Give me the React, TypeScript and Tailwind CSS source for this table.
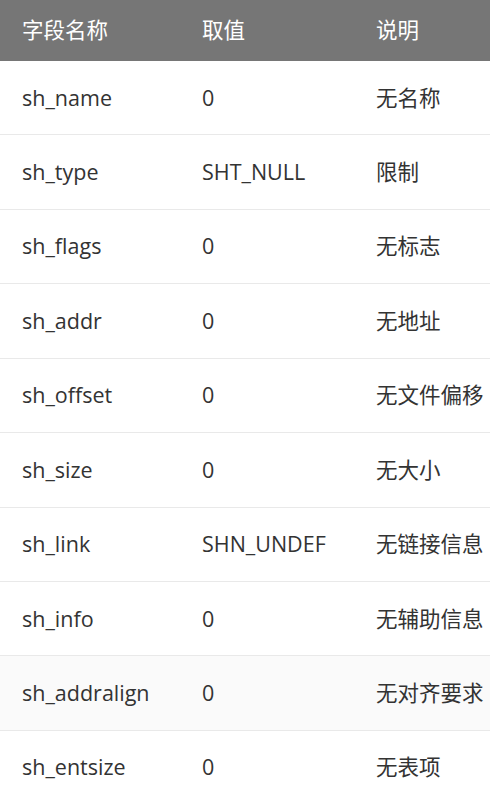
const rows = [
	{ name: 'sh_name', value: '0', desc: '无名称' },
	{ name: 'sh_type', value: 'SHT_NULL', desc: '限制' },
	{ name: 'sh_flags', value: '0', desc: '无标志' },
	{ name: 'sh_addr', value: '0', desc: '无地址' },
	{ name: 'sh_offset', value: '0', desc: '无文件偏移' },
	{ name: 'sh_size', value: '0', desc: '无大小' },
	{ name: 'sh_link', value: 'SHN_UNDEF', desc: '无链接信息' },
	{ name: 'sh_info', value: '0', desc: '无辅助信息' },
	{ name: 'sh_addralign', value: '0', desc: '无对齐要求', hover: true },
	{ name: 'sh_entsize', value: '0', desc: '无表项' },
];

export default function App() {
	return (
		<div className="w-[490px] overflow-hidden bg-white font-['Open_Sans','Noto_Sans_CJK_SC',sans-serif] text-[21.5px] text-[#333]">
			<div className="grid h-[61px] grid-cols-[180px_174px_1fr] items-center bg-[#767676] text-white">
				<div className="pl-[22px]">字段名称</div>
				<div className="pl-[22px]">取值</div>
				<div className="pl-[22px]">说明</div>
			</div>
			{rows.map((row) => (
				<div
					key={row.name}
					className={
						row.hover
							? 'grid h-[74.43px] grid-cols-[180px_174px_1fr] items-center border-b border-[#e9e9e9] bg-[#fafafa]'
							: 'grid h-[74.43px] grid-cols-[180px_174px_1fr] items-center border-b border-[#e9e9e9]'
					}
				>
					<div className="pl-[22px]">{row.name}</div>
					<div className="pl-[22px]">{row.value}</div>
					<div className="whitespace-nowrap pl-[22px]">{row.desc}</div>
				</div>
			))}
		</div>
	);
}
